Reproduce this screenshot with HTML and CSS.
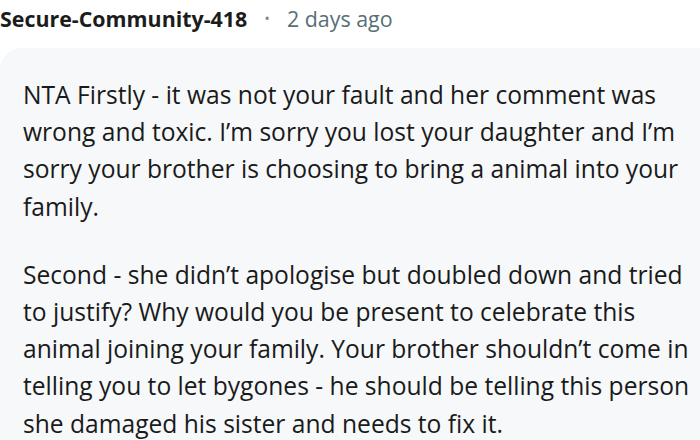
FILE: index.html
```html
<!DOCTYPE html>
<html>
<head>
<meta charset="utf-8">
<link rel="stylesheet" href="styles.css">
</head>
<body>
<div class="comment">
  <div class="meta">
    <span class="author">Secure-Community-418</span>
    <span class="dot">•</span>
    <span class="time">2 days ago</span>
  </div>
  <div class="bubble">
    <p>NTA Firstly - it was not your fault and her comment was wrong and toxic. I’m sorry you lost your daughter and I’m sorry your brother is choosing to bring a animal into your family.</p>
    <p>Second - she didn’t apologise but doubled down and tried to justify? Why would you be present to celebrate this animal joining your family. Your brother shouldn’t come in telling you to let bygones - he should be telling this person she damaged his sister and needs to fix it.</p>
  </div>
</div>
</body>
</html>
```
FILE: styles.css
```css
html, body {
  margin: 0;
  padding: 0;
  background: #ffffff;
  overflow: hidden;
}
.comment {
  width: 700px;
  height: 440px;
  overflow: hidden;
  font-family: "Open Sans", "Noto Sans", sans-serif;
}
.meta {
  display: flex;
  align-items: center;
  gap: 17px;
  height: 36px;
  margin-bottom: 12px;
}
.author {
  font-weight: 700;
  font-size: 21.4px;
  color: #1c1c1c;
}
.dot {
  font-size: 15px;
  color: #7c8c92;
}
.time {
  font-size: 21.4px;
  color: #576f76;
}
.bubble {
  background: #f6f8f9;
  border-radius: 22px 0 0 0;
  padding: 28px 0 0 23px;
  color: #1a1a1b;
  font-size: 24.6px;
  line-height: 37.2px;
}
.bubble p {
  margin: 0 0 31px 0;
}
```
